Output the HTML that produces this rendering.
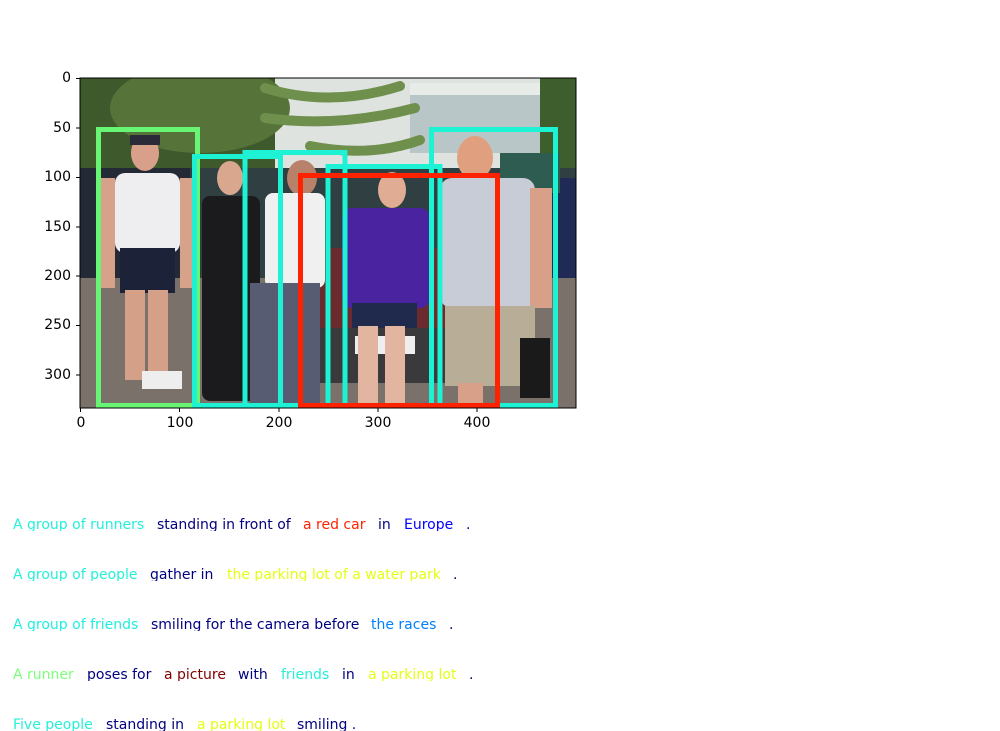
<!DOCTYPE html>
<html><head><meta charset="utf-8"><style>
body{margin:0;background:#fff;width:1000px;height:730px;position:relative;overflow:hidden;font-family:"DejaVu Sans","Liberation Sans",sans-serif;font-size:14px}
.t{position:absolute;white-space:pre;font-size:14px;line-height:16px}
.ln{position:absolute;left:0;width:1000px;height:14px;overflow:hidden}
.ln span{position:absolute;top:0;white-space:pre;line-height:16px;font-size:14px}
</style></head><body>
<svg width="1000" height="470" style="position:absolute;left:0;top:0">
<g transform="translate(80,78)">
<clipPath id="c"><rect width="496" height="330"/></clipPath>
<g clip-path="url(#c)">
<rect width="496" height="330" fill="#6e6862"/>
<rect width="496" height="95" fill="#dfe3e0"/>
<rect x="0" y="0" width="195" height="100" fill="#3e5a2c"/>
<ellipse cx="120" cy="30" rx="90" ry="45" fill="#56743a"/>
<rect x="330" y="5" width="135" height="70" fill="#b9c6c8"/>
<rect x="330" y="5" width="135" height="12" fill="#e8ece8"/>
<rect x="460" y="0" width="36" height="100" fill="#3f5e2d"/>
<g stroke="#6f8f4c" stroke-width="10" fill="none" stroke-linecap="round"><path d="M185 10 Q250 30 320 8"/><path d="M185 40 Q260 50 335 30"/><path d="M230 68 Q290 80 340 62"/><path d="M245 95 Q300 105 345 95"/></g>
<rect x="0" y="90" width="496" height="110" fill="#2f3f42"/>
<rect x="0" y="90" width="110" height="130" fill="#232a36"/>
<rect x="460" y="100" width="36" height="200" fill="#1f2a55"/>
<rect x="420" y="75" width="60" height="40" fill="#2f5c50"/>
<rect x="0" y="200" width="496" height="130" fill="#79716a"/>
<rect x="230" y="170" width="140" height="120" fill="#6b2a2e"/>
<rect x="220" y="250" width="150" height="55" fill="#3a3a3c"/>
<rect x="275" y="258" width="60" height="18" fill="#eee"/>
<ellipse cx="65" cy="75" rx="14" ry="18" fill="#d8a08a"/>
<rect x="50" y="57" width="30" height="10" fill="#2a2a38"/>
<rect x="35" y="95" width="65" height="80" rx="10" fill="#eeeef0"/>
<rect x="40" y="170" width="55" height="45" fill="#1c2238"/>
<rect x="45" y="212" width="20" height="90" fill="#d4a088"/><rect x="68" y="212" width="20" height="90" fill="#d4a088"/>
<rect x="62" y="293" width="40" height="18" fill="#eee"/>
<rect x="20" y="100" width="15" height="110" fill="#d6a28a"/><rect x="100" y="100" width="12" height="110" fill="#d6a28a"/>
<ellipse cx="150" cy="100" rx="13" ry="17" fill="#d9a68e"/>
<rect x="122" y="118" width="58" height="205" rx="8" fill="#1b1b1e"/>
<ellipse cx="222" cy="100" rx="15" ry="18" fill="#b8826a"/>
<rect x="185" y="115" width="60" height="95" rx="8" fill="#f0f0f0"/>
<rect x="170" y="205" width="70" height="120" fill="#575c72"/>
<ellipse cx="312" cy="112" rx="14" ry="18" fill="#e0ac94"/>
<rect x="262" y="130" width="88" height="100" rx="10" fill="#4a23a0"/>
<rect x="272" y="225" width="65" height="25" fill="#202a4c"/>
<rect x="278" y="248" width="20" height="80" fill="#e2b5a0"/><rect x="305" y="248" width="20" height="80" fill="#e2b5a0"/>
<ellipse cx="395" cy="80" rx="18" ry="22" fill="#e0a080"/>
<rect x="360" y="100" width="95" height="130" rx="12" fill="#c8ccd6"/>
<rect x="450" y="110" width="22" height="120" fill="#d8a088"/>
<rect x="365" y="228" width="90" height="80" fill="#b8ae98"/>
<rect x="378" y="305" width="25" height="30" fill="#d8a088"/>
<rect x="440" y="260" width="30" height="60" fill="#1a1a1a"/>
</g>
<g fill="none" stroke-width="5">
<rect x="18.5" y="51.5" width="99" height="276" stroke="#67f573"/>
<rect x="114.5" y="78.5" width="86" height="249" stroke="#1ef2d4"/>
<rect x="165" y="74.5" width="100" height="253" stroke="#1ef2d4"/>
<rect x="248" y="88.5" width="112" height="239" stroke="#1ef2d4"/>
<rect x="351.5" y="51.5" width="124" height="276" stroke="#1ef2d4"/>
<rect x="220.5" y="97.5" width="197" height="230" stroke="#ff2200"/>
</g>
<rect x="0" y="0" width="496" height="330" fill="none" stroke="#000" stroke-width="1"/>
<g stroke="#000" stroke-width="1">
<path d="M0.5 330v4M99.5 330v4M199 330v4M298 330v4M397 330v4"/>
<path d="M0 0.5h-4M0 50h-4M0 99.5h-4M0 149h-4M0 198h-4M0 247.5h-4M0 297h-4"/>
</g>
</g>
</svg>
<div class="t" style="left:71px;top:70px;transform:translateX(-100%)">0</div>
<div class="t" style="left:71px;top:120px;transform:translateX(-100%)">50</div>
<div class="t" style="left:71px;top:169px;transform:translateX(-100%)">100</div>
<div class="t" style="left:71px;top:219px;transform:translateX(-100%)">150</div>
<div class="t" style="left:71px;top:268px;transform:translateX(-100%)">200</div>
<div class="t" style="left:71px;top:317px;transform:translateX(-100%)">250</div>
<div class="t" style="left:71px;top:367px;transform:translateX(-100%)">300</div>
<div class="t" style="left:81px;top:415px;transform:translateX(-50%)">0</div>
<div class="t" style="left:180px;top:415px;transform:translateX(-50%)">100</div>
<div class="t" style="left:279px;top:415px;transform:translateX(-50%)">200</div>
<div class="t" style="left:378px;top:415px;transform:translateX(-50%)">300</div>
<div class="t" style="left:477px;top:415px;transform:translateX(-50%)">400</div>

<div class="ln" style="top:517px">
<span style="left:13px;color:#25f0d8">A group of runners</span><span style="left:157px;color:#000080">standing in front of</span><span style="left:303px;color:#ff2200">a red car</span><span style="left:378px;color:#000080">in</span><span style="left:404px;color:#0000ff">Europe</span><span style="left:466px;color:#000080">.</span></div>
<div class="ln" style="top:567px">
<span style="left:13px;color:#25f0d8">A group of people</span><span style="left:150px;color:#000080">gather in</span><span style="left:227px;color:#e4ff12">the parking lot of a water park</span><span style="left:453px;color:#000080">.</span></div>
<div class="ln" style="top:617px">
<span style="left:13px;color:#20eee0">A group of friends</span><span style="left:151px;color:#000080">smiling for the camera before</span><span style="left:371px;color:#0080ff">the races</span><span style="left:449px;color:#000080">.</span></div>
<div class="ln" style="top:667px">
<span style="left:13px;color:#7cff7a">A runner</span><span style="left:87px;color:#000080">poses for</span><span style="left:164px;color:#800000">a picture</span><span style="left:238px;color:#000080">with</span><span style="left:281px;color:#25f0d8">friends</span><span style="left:342px;color:#000080">in</span><span style="left:368px;color:#e4ff12">a parking lot</span><span style="left:469px;color:#000080">.</span></div>
<div class="ln" style="top:717px">
<span style="left:13px;color:#25f0d8">Five people</span><span style="left:106px;color:#000080">standing in</span><span style="left:197px;color:#e4ff12">a parking lot</span><span style="left:297px;color:#000080">smiling .</span></div>
</body></html>
